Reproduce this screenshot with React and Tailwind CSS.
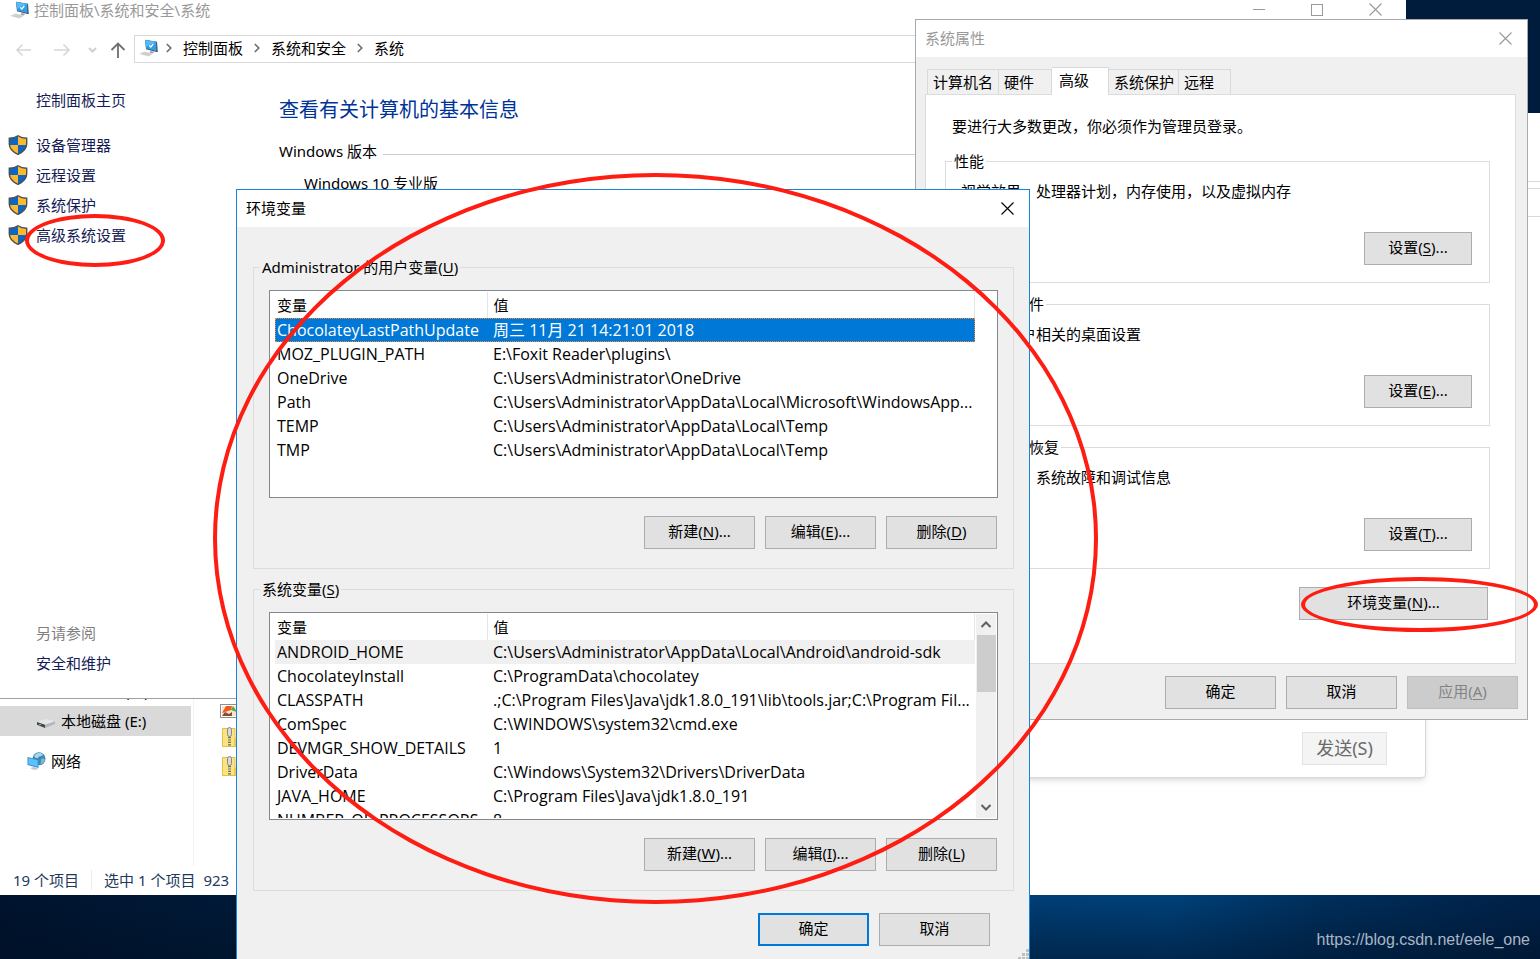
import React, { useState } from 'react';
import clsx from 'clsx';

const userVariables = [
  { name: 'ChocolateyLastPathUpdate', value: '周三 11月 21 14:21:01 2018' },
  { name: 'MOZ_PLUGIN_PATH', value: 'E:\\Foxit Reader\\plugins\\' },
  { name: 'OneDrive', value: 'C:\\Users\\Administrator\\OneDrive' },
  { name: 'Path', value: 'C:\\Users\\Administrator\\AppData\\Local\\Microsoft\\WindowsApp...' },
  { name: 'TEMP', value: 'C:\\Users\\Administrator\\AppData\\Local\\Temp' },
  { name: 'TMP', value: 'C:\\Users\\Administrator\\AppData\\Local\\Temp' },
];

const systemVariables = [
  { name: 'ANDROID_HOME', value: 'C:\\Users\\Administrator\\AppData\\Local\\Android\\android-sdk' },
  { name: 'ChocolateyInstall', value: 'C:\\ProgramData\\chocolatey' },
  { name: 'CLASSPATH', value: '.;C:\\Program Files\\Java\\jdk1.8.0_191\\lib\\tools.jar;C:\\Program Fil...' },
  { name: 'ComSpec', value: 'C:\\WINDOWS\\system32\\cmd.exe' },
  { name: 'DEVMGR_SHOW_DETAILS', value: '1' },
  { name: 'DriverData', value: 'C:\\Windows\\System32\\Drivers\\DriverData' },
  { name: 'JAVA_HOME', value: 'C:\\Program Files\\Java\\jdk1.8.0_191' },
  { name: 'NUMBER_OF_PROCESSORS', value: '8' },
];

const sidebarLinks = ['设备管理器', '远程设置', '系统保护', '高级系统设置'];

const tabs = [
  { label: '计算机名', width: 'w-[72px]' },
  { label: '硬件', width: 'w-[53px]' },
  { label: '高级', width: 'w-[57px]' },
  { label: '系统保护', width: 'w-[70px]' },
  { label: '远程', width: 'w-[52px]' },
];

const PcIcon = () => (
  <svg viewBox="0 0 20 18" className="w-5 h-[18px] shrink-0">
    <path d="M6 0.8 L18 2.8 L18.8 13 L17.6 13 L7 10.2 Z" fill="#3f5566" />
    <path d="M6.2 1 L17.2 3 L17.4 12 L7.2 9.6 Z" fill="#2f9fe8" />
    <path d="M6.2 1 L17.2 3 L7 7.4 Z" fill="#57b9f7" />
    <path d="M10.2 6.4 L11.8 8 L14.4 4.8" fill="none" stroke="#fff" strokeWidth="1.3" />
    <path d="M11.5 12 L15 12.8 L14 14.6 L10.5 13.8 Z" fill="#9aa3aa" />
    <path d="M0 14.8 L5.5 12.4 L14 14.6 L9.5 17.6 Z" fill="#d9dcde" />
    <path d="M2 14.8 L11 16.4 M4 13.6 L12.5 15.4" stroke="#b8bec3" strokeWidth="0.6" />
  </svg>
);

const ShieldIcon = () => (
  <svg viewBox="0 0 20 20" className="w-5 h-5 shrink-0">
    <defs>
      <clipPath id="shield">
        <path d="M10 0.8 C7.5 2.6 4.5 3.3 1.3 3.3 V9 C1.3 13.5 5 17 10 19.4 C15 17 18.7 13.5 18.7 9 V3.3 C15.5 3.3 12.5 2.6 10 0.8 Z" />
      </clipPath>
    </defs>
    <g clipPath="url(#shield)">
      <rect width="10" height="10" fill="#0d66c2" />
      <rect x="10" width="10" height="10" fill="#fdb92e" />
      <rect y="10" width="10" height="10" fill="#fdb92e" />
      <rect x="10" y="10" width="10" height="10" fill="#0d66c2" />
    </g>
    <path
      d="M10 0.8 C7.5 2.6 4.5 3.3 1.3 3.3 V9 C1.3 13.5 5 17 10 19.4 C15 17 18.7 13.5 18.7 9 V3.3 C15.5 3.3 12.5 2.6 10 0.8 Z"
      fill="none"
      stroke="#4c4f52"
      strokeWidth="1.4"
    />
  </svg>
);

const CloseIcon = ({ className }) => (
  <svg viewBox="0 0 13 13" className={clsx('w-[13px] h-[13px]', className)} fill="none" stroke="currentColor">
    <path d="M0.5 0.5 L12.5 12.5 M12.5 0.5 L0.5 12.5" strokeWidth="1.1" />
  </svg>
);

const Crumb = () => (
  <svg viewBox="0 0 6 10" className="w-[6px] h-[10px] shrink-0" fill="none" stroke="#6b6b6b" strokeWidth="1.6">
    <path d="M0.8 1 L4.8 5 L0.8 9" />
  </svg>
);

const DriveIcon = () => (
  <svg viewBox="0 0 18 16" className="w-[18px] h-4 shrink-0">
    <path d="M0 9 L9 5.8 L18 8.200 L8 12 Z" fill="#e4e5e6" />
    <path d="M0 9 L8 11.8 V15 L0 11.8 Z" fill="#45494b" />
    <path d="M8 11.8 L18 8.200 V11 L8 15 Z" fill="#b4b6b8" />
    <rect x="2" y="11" width="2" height="1" fill="#5fd35f" />
  </svg>
);

const NetworkIcon = () => (
  <svg viewBox="0 0 19 18" className="w-[19px] h-[18px] shrink-0">
    <circle cx="12" cy="6.8" r="6.5" fill="#3f87ad" />
    <path d="M7 4 C9 0.5 14 0 16 3 C14 5 12 3.5 11 6 C9 7 8 5.5 7 4 Z" fill="#a6d6ea" />
    <path d="M14 7 C16 6 18 7 18 8 C17 11 15 12.5 13.5 12.5 Z" fill="#77b9d6" />
    <path d="M0.5 5 L11.5 7.5 V16 L0.5 13 Z" fill="#2f8fd3" />
    <path d="M1.3 6 L10.7 8.2 V14.8 L1.3 12.3 Z" fill="#5ec0fa" />
    <path d="M3 16 L7 15 L12 17 L7 18 Z" fill="#c4c9cc" />
  </svg>
);

const ZipIcon = () => (
  <svg viewBox="0 0 20 20" className="w-5 h-5 shrink-0">
    <path d="M2.5 1.500 H15 V19.5 H2.500 Z" fill="#fbe384" stroke="#e3c13c" />
    <path d="M15 12 H17.500 V19.5 H15 Z" fill="#f5d45c" stroke="#e3c13c" />
    <rect x="7.500" y="0.5" width="4" height="9" rx="2" fill="#d8dadc" stroke="#6f7478" strokeWidth="0.8" />
    <path d="M9.500 10 V19.5" stroke="#6b6b6b" strokeWidth="3" strokeDasharray="1.2 1.2" />
  </svg>
);

const PictureIcon = () => (
  <svg viewBox="0 0 20 14" className="w-5 h-[14px] shrink-0">
    <rect x="0.5" y="0.5" width="19" height="13" fill="#fff" stroke="#8d8d8d" />
    <rect x="2" y="2" width="16" height="10" fill="#f3e3d0" />
    <path d="M2 9 L6 2 H12 L11 6 L5 8 Z" fill="#ee5a24" />
    <path d="M11 6 L13 2 L17 8 L14 7 Z" fill="#5aa832" />
    <path d="M2 12 L5 8 L9 10 L12 8 V12 Z" fill="#8a4b2a" />
  </svg>
);

// Caption with the accelerator key underlined, e.g. 新建(N)...
const Caption = ({ text, accel, suffix }) => (
  <>
    {text}
    {accel && <>(<span className="underline underline-offset-2">{accel}</span>)</>}
    {suffix}
  </>
);

const Button = ({ text, accel, suffix, className = 'w-[111px]', primary, disabled }) => (
  <button
    type="button"
    disabled={disabled}
    className={clsx(
      'h-[33px] shrink-0 pb-[3px] whitespace-nowrap',
      className,
      primary && 'border-2 border-[#0078d7] bg-[#e1e1e1]',
      disabled && 'border border-[#bfbfbf] bg-[#cccccc] text-[#838383]',
      !primary && !disabled && 'border border-[#adadad] bg-[#e1e1e1]'
    )}
  >
    <Caption text={text} accel={accel} suffix={suffix} />
  </button>
);

const VariableList = ({ label, variables, highlighted, scrollable }) => {
  const [selected, setSelected] = useState(0);

  return (
    <div className="flex h-52 overflow-hidden border border-[#828790] bg-white p-px">
      <div className="flex-1 overflow-hidden pl-1">
        <table aria-label={label} className="w-full table-fixed border-collapse whitespace-nowrap text-left">
          <thead>
            <tr className="h-[26px]">
              <th className="w-[212px] border-r border-[#e5e5e5] p-0 pl-0.5 font-normal">变量</th>
              <th className="border-r border-[#e5e5e5] p-0 pl-1.5 font-normal">值</th>
            </tr>
          </thead>
          <tbody className="font-['Open_Sans','Noto_Sans_CJK_SC',sans-serif] text-base">
            {variables.map((variable, index) => (
              <tr
                key={variable.name}
                onClick={() => setSelected(index)}
                className={clsx(
                  'h-6 leading-6',
                  index === selected && highlighted && 'bg-[#0078d7] text-white outline-1 -outline-offset-1 outline-dotted outline-[#ff8728]',
                  index === selected && !highlighted && 'bg-[#f0f0f0]'
                )}
              >
                <td className="p-0 pl-0.5">{variable.name}</td>
                <td className="p-0 pl-1.5">{variable.value}</td>
              </tr>
            ))}
          </tbody>
        </table>
      </div>
      {scrollable ? (
        <div className="ml-px flex w-5 flex-col items-center bg-[#f0f0f0]">
          <svg viewBox="0 0 20 21" className="w-5 h-[21px]" fill="none" stroke="#606060" strokeWidth="2">
            <path d="M5.5 13 L10 8.5 L14.5 13" />
          </svg>
          <div className="h-[57px] w-[19px] bg-[#cdcdcd]" />
          <svg viewBox="0 0 20 21" className="mt-auto w-5 h-[21px]" fill="none" stroke="#606060" strokeWidth="2">
            <path d="M5.5 8 L10 12.5 L14.5 8" />
          </svg>
        </div>
      ) : (
        <div className="w-[21px]" />
      )}
    </div>
  );
};

const VariableGroup = ({ title, accel, keys, ...list }) => (
  <fieldset className="min-w-0 border border-[#dcdcdc] px-[15px] pb-[19px]">
    <legend className="-ml-[9px] px-0.5 leading-[22px]">
      <Caption text={title} accel={accel} />
    </legend>
    <div className="pt-3">
      <VariableList label={title} {...list} />
    </div>
    <div className="mt-[18px] flex justify-end gap-[10px] pr-px">
      <Button text="新建" accel={keys[0]} suffix="..." />
      <Button text="编辑" accel={keys[1]} suffix="..." />
      <Button text="删除" accel={keys[2]} />
    </div>
  </fieldset>
);

const SettingsGroup = ({ title, description, accel }) => (
  <fieldset className="min-w-0 border border-[#dcdcdc] pr-[17px] pb-[17px] pl-[15px]">
    <legend className="-ml-[9px] px-0.5 leading-[22px]">{title}</legend>
    <p className="mt-[7px] leading-6">{description}</p>
    <div className="mt-[29px] flex justify-end">
      <Button text="设置" accel={accel} suffix="..." className="w-[108px]" />
    </div>
  </fieldset>
);

const BrowserWindow = () => (
  <section className="absolute top-[113px] right-0 bottom-16 left-[400px] bg-white">
    <div className="mt-[68px] h-2 border-y border-[#d9d9d9]" />
    <div className="h-7 border-b border-[#d9d9d9]" />
    <div className="absolute top-[400px] right-[114px] left-[200px] flex h-[265px] items-end justify-end rounded-b border border-[#d9d9d9] bg-white pr-[38px] pb-3 shadow-md">
      <button type="button" className="h-[33px] w-[85px] border border-[#e3e3e3] bg-[#f4f4f4] pb-0.5 text-lg leading-7 text-[#6b6b6b]">
        发送(S)
      </button>
    </div>
  </section>
);

const ExplorerWindow = () => (
  <section className="absolute top-[676px] bottom-16 left-0 flex w-[400px] flex-col bg-white">
    <div className="flex flex-1">
      <nav className="w-[194px] border-r border-[#f2f2f2] leading-[30px]">
        <a href="#d" className="flex w-[191px] items-center gap-[6px] pl-[37px]">
          <DriveIcon />
          本地磁盘 (D:)
        </a>
        <a href="#e" className="flex w-[191px] items-center gap-[6px] bg-[#d9d9d9] pl-[37px]">
          <DriveIcon />
          本地磁盘 (E:)
        </a>
        <a href="#network" className="mt-[10px] flex items-center gap-[5px] pl-[27px]">
          <NetworkIcon />
          网络
        </a>
      </nav>
      <div className="flex flex-col gap-[9px] pt-7 pl-[26px]">
        <PictureIcon />
        <ZipIcon />
        <ZipIcon />
      </div>
    </div>
    <footer className="flex h-[29px] items-center pb-0.5 pl-[13px] text-[#1e395b]">
      <span className="border-r border-[#ececec] pr-3">19 个项目</span>
      <span className="pl-3">选中 1 个项目</span>
      <span className="pl-2">923</span>
    </footer>
  </section>
);

const ControlPanelWindow = () => (
  <section className="absolute top-0 right-[134px] bottom-[260px] left-0 flex flex-col border-b border-[#a0a0a0] bg-white">
    <header className="flex h-[19px] items-center text-[#999]">
      <div className="flex items-center gap-1 pl-[10px]">
        <PcIcon />
        <span>控制面板\系统和安全\系统</span>
      </div>
      <div className="ml-auto flex items-center gap-[46px] pr-6">
        <button type="button" aria-label="最小化" className="w-3">
          <span className="block h-px bg-[#999]" />
        </button>
        <button type="button" aria-label="最大化" className="h-3 w-3 border border-[#999]" />
        <button type="button" aria-label="关闭">
          <CloseIcon />
        </button>
      </div>
    </header>

    <div className="mt-4 flex h-7 items-center">
      <svg viewBox="0 0 134 28" className="h-7 w-[134px] shrink-0" fill="none" strokeWidth="1.5">
        <path d="M31 15 H17 M22.5 9.5 L17 15 L22.5 20.5" stroke="#d6d6d6" />
        <path d="M54 15 H69 M63.5 9.5 L69 15 L63.5 20.5" stroke="#d6d6d6" />
        <path d="M89 13 L92.500 16.500 L96 13" stroke="#d0d0d0" strokeWidth="2" />
        <path d="M118 23 V9 M111.500 15 L118 8.500 L124.500 15" stroke="#6f6f6f" strokeWidth="1.8" />
      </svg>
      <nav className="flex h-7 flex-1 items-center gap-[11px] border border-[#d9d9d9] pb-0.5 pl-1">
        <PcIcon />
        <div className="-ml-1">
          <Crumb />
        </div>
        <a href="#panel">控制面板</a>
        <Crumb />
        <a href="#security">系统和安全</a>
        <Crumb />
        <a href="#system">系统</a>
      </nav>
    </div>

    <div className="flex flex-1">
      <aside className="flex w-[279px] flex-col pt-[22px] pb-5 leading-[30px] text-[#151c55]">
        <a href="#home" className="pl-9">控制面板主页</a>
        <ul className="mt-[15px]">
          {sidebarLinks.map((link) => (
            <li key={link}>
              <a href="#settings" className="flex items-center gap-2 pl-2">
                <ShieldIcon />
                {link}
              </a>
            </li>
          ))}
        </ul>
        <div className="mt-auto pl-9">
          <p className="text-[#7f7f7f]">另请参阅</p>
          <a href="#maintenance">安全和维护</a>
        </div>
      </aside>
      <main className="flex-1 pt-8">
        <h1 className="text-xl leading-[30px] text-[#003399]">查看有关计算机的基本信息</h1>
        <div className="mt-4 flex items-center gap-1.5 leading-5">
          <h2>Windows 版本</h2>
          <span className="mt-1.5 h-px flex-1 bg-[#cccccc]" />
        </div>
        <p className="mt-3 pl-[25px] leading-5">Windows 10 专业版</p>
      </main>
    </div>
  </section>
);

const SystemPropertiesDialog = () => {
  const [activeTab, setActiveTab] = useState('高级');

  return (
    <section className="absolute top-[19px] right-3 w-[613px] border border-[#aaaaaa] bg-[#f0f0f0]">
      <header className="flex h-[37px] items-center justify-between bg-white pr-[15px] pb-px pl-[9px] text-[#999]">
        <h2>系统属性</h2>
        <button type="button" aria-label="关闭">
          <CloseIcon />
        </button>
      </header>

      <div className="pt-[10px] pr-[11px] pl-[9px]">
        <div role="tablist" className="relative z-10 -mb-px flex h-7 items-end pl-0.5">
          {tabs.map((tab) => (
            <button
              key={tab.label}
              type="button"
              role="tab"
              aria-selected={activeTab === tab.label}
              onClick={() => setActiveTab(tab.label)}
              className={clsx(
                'border-t border-r border-[#d9d9d9] text-left whitespace-nowrap first:border-l',
                tab.width,
                activeTab === tab.label ? 'h-7 bg-white pb-1 pl-[7px]' : 'mb-px h-[25px] pb-px pl-[5px]'
              )}
            >
              {tab.label}
            </button>
          ))}
        </div>
        <div className="border border-[#dcdcdc] bg-white pt-[19px] pr-[25px] pb-[43px] pl-[19px]">
          <p className="pl-[7px] leading-6">要进行大多数更改，你必须作为管理员登录。</p>
          <div className="mt-3 flex flex-col gap-[10px]">
            <SettingsGroup title="性能" description="视觉效果，处理器计划，内存使用，以及虚拟内存" accel="S" />
            <SettingsGroup title="用户配置文件" description="与登录帐户相关的桌面设置" accel="E" />
            <SettingsGroup title="启动和故障恢复" description="系统启动、系统故障和调试信息" accel="T" />
          </div>
          <div className="mt-[18px] flex justify-end pr-0.5">
            <Button text="环境变量" accel="N" suffix="..." className="w-[189px]" />
          </div>
        </div>
      </div>

      <footer className="flex justify-end gap-[10px] pt-3 pr-[9px] pb-[10px]">
        <Button text="确定" />
        <Button text="取消" />
        <Button text="应用" accel="A" disabled />
      </footer>
    </section>
  );
};

const EnvironmentDialog = () => (
  <section className="absolute top-[189px] left-[236px] w-[794px] border border-[#1883d7] bg-[#f0f0f0]">
    <header className="flex h-[37px] items-center justify-between bg-white pr-[15px] pb-px pl-[9px]">
      <h2>环境变量</h2>
      <button type="button" aria-label="关闭">
        <CloseIcon />
      </button>
    </header>

    <div className="flex flex-col gap-[9px] pt-[29px] pr-[15px] pl-4">
      <VariableGroup
        title="Administrator 的用户变量"
        accel="U"
        keys={['N', 'E', 'D']}
        variables={userVariables}
        highlighted
      />
      <VariableGroup
        title="系统变量"
        accel="S"
        keys={['W', 'I', 'L']}
        variables={systemVariables}
        scrollable
      />
    </div>

    <footer className="flex justify-end gap-[10px] pt-[22px] pr-[39px] pb-[14px]">
      <Button text="确定" primary />
      <Button text="取消" />
    </footer>
    <svg viewBox="0 0 11 11" className="absolute right-0 bottom-0 h-[11px] w-[11px]" fill="#bfbfbf">
      <path d="M8 0h3v3h-3z M4 4h3v3h-3z M8 4h3v3h-3z M0 8h3v3h-3z M4 8h3v3h-3z M8 8h3v3h-3z" />
    </svg>
  </section>
);

// Red marker rings drawn on top of the windows
const Markers = () => (
  <div className="pointer-events-none">
    <div className="absolute top-[173px] left-[213px] h-[731px] w-[885px] rounded-[50%] border-4 border-[#fe1d12]" />
    <div className="absolute top-[214px] left-[25px] h-[53px] w-[140px] rounded-[50%] border-4 border-[#fe1d12]" />
    <div className="absolute top-[577px] right-0.5 h-[55px] w-[237px] rounded-[50%] border-4 border-[#fe1d12]" />
  </div>
);

const App = () => (
  <div className="relative h-screen w-full overflow-hidden bg-[#001c3d] font-['Noto_Sans','Noto_Sans_CJK_SC',sans-serif] text-[15px] leading-5 text-black">
    <div className="absolute inset-x-0 bottom-0 h-16 bg-[linear-gradient(to_bottom,transparent,rgba(0,15,35,0.5)),linear-gradient(to_right,#00132e_0%,#001a38_15%,#003f76_66%,#00417a_76%,#002f5c_86%,#002148_100%)]" />
    <BrowserWindow />
    <ExplorerWindow />
    <ControlPanelWindow />
    <SystemPropertiesDialog />
    <EnvironmentDialog />
    <Markers />
    <a
      href="#source"
      className="absolute right-[10px] bottom-[9px] font-['Liberation_Sans',sans-serif] text-base leading-5 text-[#a9b6c4]"
    >
      https://blog.csdn.net/eele_one
    </a>
  </div>
);

export default App;
